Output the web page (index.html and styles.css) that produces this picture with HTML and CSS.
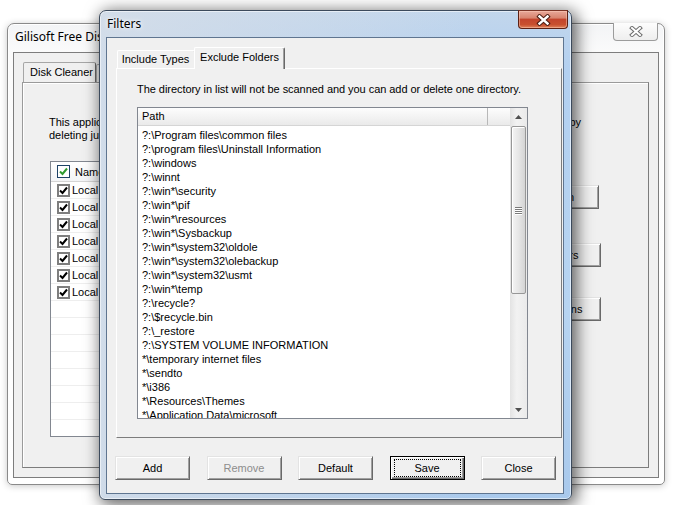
FILE: index.html
```html
<!DOCTYPE html>
<html>

<head>
    <meta charset="UTF-8">
    <title>Filters</title>
    <link rel="stylesheet" href="styles.css">
</head>

<body>
    <div id="desktop">

        <!-- main application window, inactive behind the dialog -->
        <div class="win win-back">
            <div class="titlebar">
                <div class="title back-title">Gilisoft Free Disk Cleaner</div>
                <div class="close-btn close-inactive">
                    <svg width="14" height="11" viewBox="0 0 14 11">
                        <path d="M3 2 L11 9 M11 2 L3 9" stroke="#6f6f6f" stroke-width="4" stroke-linecap="square" fill="none"/>
                        <path d="M3 2 L11 9 M11 2 L3 9" stroke="#fff" stroke-width="2" stroke-linecap="square" fill="none"/>
                    </svg>
                </div>
            </div>
            <div class="client back-client">
                <div class="tabs back-tabs">
                    <div class="tab tab-active back-tab">Disk Cleaner</div>
                    <div class="tab back-tab">Registry Cleaner</div>
                </div>
                <div class="panel back-panel">
                    <div class="intro">
                        <div class="intro-first">
                            <span>This application scans your disks and frees up space</span>
                            <span>by</span>
                        </div>
                        <div>deleting junk files.</div>
                    </div>
                    <div class="back-row">
                        <div class="lv">
                            <div class="lv-head">
                                <span class="chk chk-head">
                                    <svg width="11" height="11" viewBox="0 0 11 11"><path d="M2 5.5 L4.5 8 L9 2.5" stroke="#2f9a2f" stroke-width="2" fill="none"/></svg>
                                </span>
                                Name
                            </div>
                            <div class="lv-row"><span class="chk"><svg width="9" height="9" viewBox="0 0 9 9"><path d="M1 4.5 L3.5 7 L8 1.5" stroke="#000" stroke-width="2" fill="none"/></svg></span>Local Disk</div>
                            <div class="lv-row"><span class="chk"><svg width="9" height="9" viewBox="0 0 9 9"><path d="M1 4.5 L3.5 7 L8 1.5" stroke="#000" stroke-width="2" fill="none"/></svg></span>Local Disk</div>
                            <div class="lv-row"><span class="chk"><svg width="9" height="9" viewBox="0 0 9 9"><path d="M1 4.5 L3.5 7 L8 1.5" stroke="#000" stroke-width="2" fill="none"/></svg></span>Local Disk</div>
                            <div class="lv-row"><span class="chk"><svg width="9" height="9" viewBox="0 0 9 9"><path d="M1 4.5 L3.5 7 L8 1.5" stroke="#000" stroke-width="2" fill="none"/></svg></span>Local Disk</div>
                            <div class="lv-row"><span class="chk"><svg width="9" height="9" viewBox="0 0 9 9"><path d="M1 4.5 L3.5 7 L8 1.5" stroke="#000" stroke-width="2" fill="none"/></svg></span>Local Disk</div>
                            <div class="lv-row"><span class="chk"><svg width="9" height="9" viewBox="0 0 9 9"><path d="M1 4.5 L3.5 7 L8 1.5" stroke="#000" stroke-width="2" fill="none"/></svg></span>Local Disk</div>
                            <div class="lv-row"><span class="chk"><svg width="9" height="9" viewBox="0 0 9 9"><path d="M1 4.5 L3.5 7 L8 1.5" stroke="#000" stroke-width="2" fill="none"/></svg></span>Local Disk</div>
                            <div class="lv-row"></div>
                            <div class="lv-row"></div>
                            <div class="lv-row"></div>
                            <div class="lv-row"></div>
                            <div class="lv-row"></div>
                            <div class="lv-row"></div>
                            <div class="lv-row"></div>
                            <div class="lv-row"></div>
                        </div>
                        <div class="side-btns">
                            <div class="btn side-btn side-btn-1">Scan</div>
                            <div class="btn side-btn side-btn-2">Filters</div>
                            <div class="btn side-btn side-btn-3">Options</div>
                        </div>
                    </div>
                </div>
            </div>
        </div>

        <!-- Filters dialog -->
        <div class="win win-front">
            <div class="titlebar front-titlebar">
                <div class="title front-title">Filters</div>
                <div class="close-btn close-red">
                    <svg width="15" height="12" viewBox="0 0 15 12">
                        <path d="M3.5 2.5 L11.5 9.5 M11.5 2.5 L3.5 9.5" stroke="#4a1c12" stroke-width="4.4" stroke-linecap="square" fill="none"/>
                        <path d="M3.5 2.5 L11.5 9.5 M11.5 2.5 L3.5 9.5" stroke="#fff" stroke-width="2.4" stroke-linecap="square" fill="none"/>
                    </svg>
                </div>
            </div>
            <div class="client front-client">
                <div class="tabs front-tabs">
                    <div class="tab front-tab tab-include">Include Types</div>
                    <div class="tab front-tab tab-active tab-exclude">Exclude Folders</div>
                </div>
                <div class="panel front-panel">
                    <div class="desc">The directory in list will not be scanned and you can add or delete one directory.</div>
                    <div class="listbox">
                        <div class="lb-main">
                            <div class="lb-head">
                                <div class="lb-col">Path</div>
                                <div class="lb-col-rest"></div>
                            </div>
                            <div class="lb-items">
                                <div class="lb-item">?:\Program files\common files</div>
                                <div class="lb-item">?:\program files\Uninstall Information</div>
                                <div class="lb-item">?:\windows</div>
                                <div class="lb-item">?:\winnt</div>
                                <div class="lb-item">?:\win*\security</div>
                                <div class="lb-item">?:\win*\pif</div>
                                <div class="lb-item">?:\win*\resources</div>
                                <div class="lb-item">?:\win*\Sysbackup</div>
                                <div class="lb-item">?:\win*\system32\oldole</div>
                                <div class="lb-item">?:\win*\system32\olebackup</div>
                                <div class="lb-item">?:\win*\system32\usmt</div>
                                <div class="lb-item">?:\win*\temp</div>
                                <div class="lb-item">?:\recycle?</div>
                                <div class="lb-item">?:\$recycle.bin</div>
                                <div class="lb-item">?:\_restore</div>
                                <div class="lb-item">?:\SYSTEM VOLUME INFORMATION</div>
                                <div class="lb-item">*\temporary internet files</div>
                                <div class="lb-item">*\sendto</div>
                                <div class="lb-item">*\i386</div>
                                <div class="lb-item">*\Resources\Themes</div>
                                <div class="lb-item">*\Application Data\microsoft</div>
                            </div>
                        </div>
                        <div class="scrollbar">
                            <div class="sb-arrow">
                                <svg width="7" height="4" viewBox="0 0 7 4"><polygon points="0,4 3.5,0 7,4" fill="#505050"/></svg>
                            </div>
                            <div class="sb-track">
                                <div class="sb-thumb">
                                    <div class="grip"></div>
                                    <div class="grip"></div>
                                    <div class="grip"></div>
                                    <div class="grip"></div>
                                </div>
                            </div>
                            <div class="sb-arrow">
                                <svg width="7" height="4" viewBox="0 0 7 4"><polygon points="0,0 7,0 3.5,4" fill="#505050"/></svg>
                            </div>
                        </div>
                    </div>
                </div>
                <div class="btn-row">
                    <div class="btn">Add</div>
                    <div class="btn btn-disabled">Remove</div>
                    <div class="btn">Default</div>
                    <div class="btn btn-default"><span class="focus-rect">Save</span></div>
                    <div class="btn">Close</div>
                </div>
            </div>
        </div>

    </div>
</body>

</html>
```

FILE: styles.css
```css
* {
    box-sizing: border-box;
}

html,
body {
    margin: 0;
    height: 100%;
}

body {
    background: #fff;
    font-family: "Liberation Sans", Arial, sans-serif;
    font-size: 11px;
    color: #000;
    overflow: hidden;
}

#desktop {
    position: relative;
    width: 677px;
    height: 505px;
}

/* windows */

.win {
    position: absolute;
    display: flex;
    flex-direction: column;
}

.titlebar {
    display: flex;
    justify-content: space-between;
    align-items: flex-start;
    flex-shrink: 0;
}

.title {
    font-family: "Noto Sans", "Open Sans", sans-serif;
    font-size: 12px;
    line-height: 16px;
    white-space: nowrap;
}

.close-btn {
    display: flex;
    align-items: center;
    justify-content: center;
    border-radius: 0 0 4px 4px;
}

.client {
    flex: 1;
    min-height: 0;
    display: flex;
    flex-direction: column;
    background: #f0f0f0;
}

/* back window */

.win-back {
    left: 7px;
    top: 23px;
    width: 658px;
    height: 462px;
    padding: 0 5px 6px;
    border: 1px solid #8a8a8a;
    border-radius: 7px 7px 5px 5px;
    background: linear-gradient(#f3f4f6, #fbfbfb 30px, #fff);
    box-shadow: 0 1px 7px rgba(0, 0, 0, 0.22), inset 0 0 0 1px #fff;
}

.win-back .titlebar {
    height: 28px;
}

.back-title {
    padding: 5px 0 0 2px;
}

.close-inactive {
    width: 45px;
    height: 18px;
    margin-right: 1px;
    margin-top: -1px;
    border: 1px solid #9c9c9c;
    border-top: none;
    background: linear-gradient(#fdfdfd, #eeeeee);
}

.back-client {
    border: 1px solid #7d7d7d;
    padding: 9px 9px 9px 8px;
}

.tabs {
    display: flex;
    align-items: flex-end;
    flex-shrink: 0;
}

.tab {
    background: #f0f0f0;
    border: 1px solid;
    border-color: #fff #696969 transparent #fff;
    border-bottom: none;
    border-radius: 2px 2px 0 0;
    white-space: nowrap;
}

.back-tabs {
    height: 20px;
    padding-left: 1px;
}

.back-tab {
    height: 20px;
    line-height: 19px;
    padding: 0 5px 0 6px;
    border-color: #a6a6a6 #696969 transparent #a6a6a6;
    width: 73px;
}

.back-tab + .back-tab {
    height: 18px;
    width: 100px;
}

.panel {
    flex: 1;
    min-height: 0;
    display: flex;
    flex-direction: column;
    border: 1px solid;
}

.back-panel {
    border-color: #9a9a9a #7c7c7c #7c7c7c #9a9a9a;
    box-shadow: inset 1px 1px #fff;
    padding: 33px 47px 30px 26px;
}

.intro {
    line-height: 13px;
    margin-right: 20px;
}

.intro-first {
    display: flex;
    justify-content: space-between;
}

.back-row {
    flex: 1;
    min-height: 0;
    display: flex;
    margin-top: 19px;
    margin-left: 1px;
    gap: 26px;
}

.lv {
    flex: 1;
    background: #fff;
    border: 1px solid #828790;
    overflow: hidden;
}

.lv-head {
    height: 20px;
    display: flex;
    align-items: center;
    padding-left: 6px;
    border-bottom: 1px solid #d5d5d5;
    background: linear-gradient(#fff, #f3f4f6);
}

.lv-row {
    height: 17px;
    display: flex;
    align-items: center;
    padding-left: 6px;
    border-bottom: 1px solid #eeeeee;
    white-space: nowrap;
}

.chk {
    width: 13px;
    height: 13px;
    flex-shrink: 0;
    margin-right: 2px;
    border: 2px solid #7e7e7e;
    background: #fff;
    display: flex;
    align-items: center;
    justify-content: center;
}

.chk-head {
    border: 1px solid #1d4266;
    margin-right: 5px;
}

.side-btns {
    width: 82px;
    display: flex;
    flex-direction: column;
    align-items: flex-end;
    padding-top: 24px;
}

.side-btn {
    width: 82px;
}

.side-btn-1 {
    width: 66px;
    margin-right: 2px;
}

.side-btn-2 {
    margin-top: 34px;
}

.side-btn-3 {
    margin-top: 30px;
}

/* buttons */

.btn {
    width: 75px;
    height: 24px;
    line-height: 22px;
    text-align: center;
    background: #f0f0f0;
    border: 1px solid;
    border-color: #e3e3e3 #696969 #696969 #e3e3e3;
    box-shadow: inset 1px 1px #fff, inset -1px -1px #a0a0a0;
    white-space: nowrap;
}

.btn-disabled {
    color: #8d8d8d;
}

.btn-default {
    border-color: #000;
    box-shadow: inset 1px 1px #fff, inset -1px -1px #696969, inset -2px -2px #a0a0a0;
    padding: 2px 3px;
    line-height: 16px;
}

.focus-rect {
    display: block;
    height: 18px;
    line-height: 16px;
    border: 1px dotted #000;
}

/* filters dialog */

.win-front {
    left: 99px;
    top: 10px;
    width: 473px;
    height: 490px;
    padding: 0 7px 5px 6px;
    border: 1px solid #3c4a5c;
    border-radius: 7px 7px 6px 6px;
    background:
        linear-gradient(to right, rgba(214, 222, 232, 0.85), rgba(214, 222, 232, 0.3) 55%, rgba(190, 220, 250, 0) 80%),
        linear-gradient(#c2d6ec, #b3d0f0 60px, #b7d4f1 300px, #a9c9ec);
    box-shadow: 3px 3px 16px 2px rgba(0, 0, 0, 0.6), inset 0 0 0 1px rgba(255, 255, 255, 0.55);
}

.front-titlebar {
    height: 26px;
}

.front-title {
    padding: 5px 0 0 1px;
    text-shadow: 0 0 6px #fff, 0 0 3px #fff;
}

.close-red {
    width: 50px;
    height: 19px;
    margin-right: -4px;
    margin-top: -1px;
    border: 1px solid #5c2014;
    border-top-color: #7a3426;
    background: linear-gradient(#e8a89a, #d88570 40%, #c3452d 50%, #c8502f 80%, #e0835c);
    box-shadow: inset 0 0 0 1px rgba(255, 210, 190, 0.45);
}

.front-client {
    border: 1px solid #5f7590;
    padding: 9px 0 13px 0;
}

.front-tabs {
    height: 21px;
    padding-left: 10px;
    position: relative;
    z-index: 1;
}

.front-tab {
    line-height: 17px;
    text-align: center;
}

.tab-include {
    height: 18px;
    width: 78px;
    border-right-color: #a0a0a0;
    padding-right: 1px;
}

.tab-exclude {
    height: 22px;
    width: 91px;
    margin-bottom: -1px;
    margin-left: -1px;
    line-height: 18px;
    box-shadow: inset -1px 0 #a0a0a0;
}

.front-panel {
    margin: 0 1px 0 9px;
    border-color: #fff #7c7c7c #7c7c7c #fff;
    padding: 14px 0 0 20px;
}

.desc {
    line-height: 13px;
    white-space: nowrap;
    letter-spacing: -0.05px;
}

.listbox {
    margin-top: 11px;
    width: 391px;
    height: 312px;
    flex-shrink: 0;
    display: flex;
    background: #fff;
    border: 1px solid #828790;
    overflow: hidden;
}

.lb-main {
    flex: 1;
    display: flex;
    flex-direction: column;
    overflow: hidden;
}

.lb-head {
    height: 18px;
    display: flex;
    flex-shrink: 0;
    border-bottom: 1px solid #d5d5d5;
    background: linear-gradient(#fdfdfd, #eaeaea);
}

.lb-col {
    width: 350px;
    padding-left: 4px;
    line-height: 17px;
    border-right: 1px solid #b8b8b8;
}

.lb-col-rest {
    flex: 1;
}

.lb-items {
    padding-top: 2px;
    padding-left: 4px;
}

.lb-item {
    height: 14px;
    line-height: 14px;
    white-space: nowrap;
}

.scrollbar {
    width: 17px;
    display: flex;
    flex-direction: column;
    background: linear-gradient(to right, #e3e3e3, #f2f2f2 40%, #eaeaea);
}

.sb-arrow {
    height: 17px;
    display: flex;
    align-items: center;
    justify-content: center;
    flex-shrink: 0;
}

.sb-track {
    flex: 1;
    padding: 1px 1px 0 1px;
}

.sb-thumb {
    height: 168px;
    border: 1px solid #979797;
    border-radius: 2px;
    background: linear-gradient(to right, #f4f4f4, #e6e6e6 50%, #d4d4d4);
    box-shadow: inset 1px 1px #fff;
    display: flex;
    flex-direction: column;
    align-items: center;
    justify-content: center;
    gap: 1px;
}

.grip {
    width: 7px;
    height: 1px;
    background: #7a7a7a;
    box-shadow: 0 1px #fff;
}

.btn-row {
    display: flex;
    justify-content: space-between;
    margin-top: 18px;
    padding: 0 7px 0 8px;
    flex-shrink: 0;
}
```
